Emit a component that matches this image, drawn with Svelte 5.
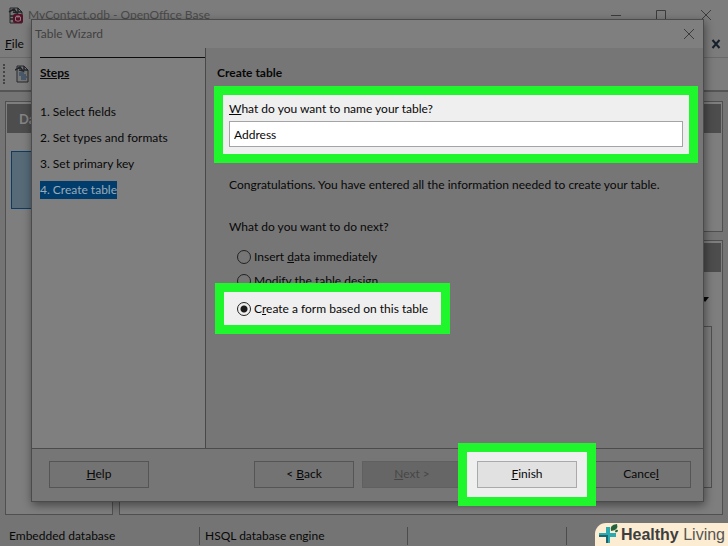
<script lang="ts">
	const steps = ["Select fields", "Set types and formats", "Set primary key", "Create table"];
	const currentStep = 3;

	let tableName = $state("Address");
	let next = $state("form");
</script>

<div class="desktop">
	<div class="app-title">
		<svg class="doc-icon" width="16" height="17" viewBox="0 0 16 17">
			<path d="M2 1h8l4 4v11H2z" fill="#777" stroke="#26292c" />
			<path d="M10 1v4h4M1 5l5-3 3 4-4-1M2 9h4M2 12h4" fill="none" stroke="#202326" stroke-width="1.5" />
			<rect x="5" y="7" width="10" height="9" rx="2" fill="#551226" />
			<ellipse cx="10" cy="9.5" rx="2.5" ry="1" fill="#8d7880" />
			<path d="M7.500 10v3.500q2.500 1.500 5 0V10" fill="none" stroke="#8d7880" />
		</svg>
		<span class="app-name">MyContact.odb - OpenOffice Base</span>
		<button class="win-btn" aria-label="Minimize">
			<svg width="12" height="12" viewBox="0 0 12 12"><path d="M1 6.500h10" /></svg>
		</button>
		<button class="win-btn" aria-label="Maximize">
			<svg width="12" height="12" viewBox="0 0 12 12"><path d="M1.500 1.500h9v10h-9z" /></svg>
		</button>
		<button class="win-btn" aria-label="Close">
			<svg width="12" height="12" viewBox="0 0 12 12"><path d="M1 1l10 10M11 1L1 11" /></svg>
		</button>
	</div>
	<div class="app-menu">
		<button class="menu-item"><u>F</u>ile</button>
		<button class="doc-close" aria-label="Close document">
			<svg width="10" height="10" viewBox="0 0 10 10"><path d="M1.500 1l7 8M8.500 1l-7 8" fill="none" stroke="#17212c" stroke-width="2" /></svg>
		</button>
	</div>
	<div class="app-toolbar">
		<span class="grip"></span>
		<svg class="doc-icon" width="15" height="18" viewBox="0 0 15 18">
			<path d="M2 1h7l4 4v12H2z" fill="#777" stroke="#24282c" />
			<path d="M9 1v4h4M0 5l5-3 3 4-4-1" fill="none" stroke="#24282c" stroke-width="1.500" />
			<path d="M4 8h5M4 10h7M6 12h6M6 14h5" stroke="#1f3d5c" />
		</svg>
	</div>
	<div class="panes">
		<div class="pane pane-left">
			<div class="pane-title">Da</div>
			<div class="pane-item"></div>
		</div>
		<div class="pane-stack">
			<div class="pane pane-tasks"><div class="pane-title"></div></div>
			<div class="pane pane-tables">
				<div class="pane-title"></div>
				<div class="preview-mode">
					<svg width="8" height="6" viewBox="0 0 8 6"><path d="M0 1h8L4 6z" fill="#080808" /></svg>
				</div>
				<div class="preview"></div>
			</div>
		</div>
	</div>
	<div class="status">
		<span class="status-type">Embedded database</span>
		<span class="status-engine">HSQL database engine</span>
		<span class="status-host"></span>
	</div>

	<div class="wizard" role="dialog" aria-labelledby="wizard-title">
		<div class="wizard-title">
			<span id="wizard-title">Table Wizard</span>
			<button class="win-btn" aria-label="Close wizard">
				<svg width="12" height="12" viewBox="0 0 12 12"><path d="M1 1l10 10M11 1L1 11" /></svg>
			</button>
		</div>
		<div class="wizard-body">
			<nav class="steps">
				<h2>Steps</h2>
				<ol>
					{#each steps as step, i}
						<li><span class="step" class:current={i === currentStep}>{i + 1}. {step}</span></li>
					{/each}
				</ol>
			</nav>
			<form class="page">
				<h2>Create table</h2>
				<div class="name-field spotlight">
					<label for="table-name"><u>W</u>hat do you want to name your table?</label>
					<input id="table-name" type="text" bind:value={tableName} />
				</div>
				<p class="message">Congratulations. You have entered all the information needed to create your table.</p>
				<fieldset>
					<legend>What do you want to do next?</legend>
					<label class="option"><input type="radio" value="data" bind:group={next} /><span>Insert <u>d</u>ata immediately</span></label>
					<label class="option"><input type="radio" value="design" bind:group={next} /><span><u>M</u>odify the table design</span></label>
					<label class="option spotlight"><input type="radio" value="form" bind:group={next} /><span>C<u>r</u>eate a form based on this table</span></label>
				</fieldset>
			</form>
		</div>
		<div class="wizard-footer">
			<button class="btn help"><u>H</u>elp</button>
			<button class="btn">&lt; <u>B</u>ack</button>
			<button class="btn next" disabled><u>N</u>ext &gt;</button>
			<div class="finish spotlight"><button class="btn"><u>F</u>inish</button></div>
			<button class="btn">Cance<u>l</u></button>
		</div>
	</div>

	<div class="watermark">
		<svg width="21" height="23" viewBox="0 0 21 23">
			<path d="M8 4h4v6h6v4h-6v6H8v-6H1v-4h7z" fill="#2aa9b0" />
			<path d="M1 12h9v8H8v-6H1z" fill="#186674" />
			<path d="M13 8q-2-6 6-7q2 6-6 7" fill="#24643a" />
			<path d="M17 9q0-3 3-2q0 3-3 2" fill="#24643a" />
		</svg>
		<span><b>Healthy</b> Living</span>
	</div>
</div>

<style>
	:global(body) {
		background: #737373;
	}

	.desktop {
		position: relative;
		display: flex;
		flex-direction: column;
		min-height: 100vh;
		overflow: hidden;
		background: #747474;
		color: #080808;
		font-family: Lato, "Noto Sans", sans-serif;
		font-size: 12px;
		line-height: 18px;
	}

	button,
	input {
		font: inherit;
		color: inherit;
	}

	button {
		padding: 0;
		border: none;
		background: none;
	}

	h2 {
		margin: 0;
		font-size: inherit;
	}

	.app-title {
		display: flex;
		align-items: center;
		height: 30px;
		padding: 0 16px 0 8px;
		background: #7c7c7c;
		color: #4a4a4a;
	}

	.doc-icon {
		flex: none;
	}

	.app-name {
		flex: 1;
		margin-left: 4px;
	}

	.win-btn {
		display: grid;
		place-items: center;
		width: 12px;
		margin-left: 33px;
	}

	.win-btn path {
		fill: none;
		stroke: #3c3c3c;
	}

	.app-menu {
		display: flex;
		align-items: center;
		justify-content: space-between;
		height: 27px;
		padding: 0 7px 0 5px;
		border-bottom: 1px solid #6a6a6a;
		background: #7c7c7c;
	}

	.doc-close {
		display: grid;
	}

	.app-toolbar {
		display: flex;
		align-items: center;
		gap: 10px;
		height: 32px;
		padding-left: 3px;
		border-bottom: 2px solid #555;
		background: #7c7c7c;
	}

	.grip {
		height: 20px;
		border-left: 2px dotted #444;
	}

	.panes {
		flex: 1;
		display: flex;
		gap: 6px;
		padding: 9px 5px 7px;
	}

	.pane {
		padding: 2px 1px;
		border: 1px solid #505050;
		background: #7e7e7e;
	}

	.pane-left {
		width: 104px;
	}

	.pane-title {
		height: 29px;
		padding-left: 12px;
		background: #4d4d4d;
		color: #858585;
		font-size: 13px;
		font-weight: bold;
		line-height: 30px;
	}

	.pane-item {
		height: 56px;
		margin: 18px 4px 0;
		border: 1px solid #0c3c66;
		background: #566a78;
	}

	.pane-stack {
		flex: 1;
		display: flex;
		flex-direction: column;
		gap: 8px;
	}

	.pane-tasks {
		height: 125px;
	}

	.pane-tables {
		flex: 1;
		display: flex;
		flex-direction: column;
	}

	.preview-mode {
		display: flex;
		align-items: center;
		justify-content: flex-end;
		height: 54px;
		padding-right: 12px;
	}

	.preview {
		flex: 1;
		margin: 0 9px 24px;
		border: 1px solid #505050;
	}

	.status {
		display: flex;
		align-items: center;
		height: 20px;
		padding: 4px 0 0 9px;
	}

	.status span {
		height: 18px;
		border-right: 1px solid #4c4c4c;
	}

	.status-type {
		width: 190px;
	}

	.status-engine {
		width: 202px;
		padding-left: 5px;
	}

	.status-host {
		width: 158px;
	}

	.wizard {
		position: absolute;
		inset: 19px 24px 44px 31px;
		display: flex;
		flex-direction: column;
		border: 1px solid #4b4b4b;
		background: #767676;
		box-shadow: 1px 3px 9px rgba(0, 0, 0, 0.45);
	}

	.wizard-title {
		display: flex;
		align-items: center;
		justify-content: space-between;
		height: 28px;
		padding: 0 8px 0 3px;
		background: #7f7f7f;
		color: #414141;
	}

	.wizard-body {
		flex: 1;
		display: flex;
	}

	.steps {
		width: 165px;
		padding: 9px 0 0 8px;
		border-right: 1px solid #484848;
		background: #7f7f7f;
	}

	.steps h2 {
		padding-top: 6px;
		border-top: 1px solid #0c0c0c;
		text-decoration: underline;
	}

	ol {
		display: grid;
		gap: 8px;
		margin: 21px 0 0;
		padding: 0;
		list-style: none;
	}

	.step {
		display: inline-block;
	}

	.step.current {
		background: #003d6d;
		color: #9aabb8;
	}

	.page {
		flex: 1;
		padding: 16px 14px 0 17px;
	}

	.page h2 {
		margin-left: -6px;
	}

	.spotlight {
		position: relative;
		background: #efefef;
		box-shadow: 0 0 0 9px #20f62c;
	}

	.name-field {
		display: grid;
		gap: 3px;
		margin-top: 13px;
		padding: 5px 6px 7px;
	}

	.name-field input {
		min-width: 0;
		height: 26px;
		box-sizing: border-box;
		padding: 0 4px;
		border: 1px solid #a4a4a4;
		background: #fff;
		outline: none;
	}

	.message {
		margin: 22px 0 0 6px;
	}

	fieldset {
		display: flex;
		flex-direction: column;
		align-items: flex-start;
		margin: 24px 0 0;
		padding: 0;
		border: none;
	}

	legend {
		margin-left: 6px;
		padding: 0 0 9px;
	}

	.option {
		display: flex;
		align-items: center;
		gap: 3px;
		height: 24px;
		padding: 0 13px 0 14px;
	}

	.option.spotlight {
		height: 33px;
		margin: -1px 0 0 1px;
		padding-left: 13px;
	}

	.option input {
		appearance: none;
		width: 14px;
		height: 14px;
		box-sizing: border-box;
		margin: 0;
		border: 1px solid #222;
		border-radius: 50%;
	}

	.option input:checked {
		background: radial-gradient(circle, #1c1c1c 3px, transparent 4px);
	}

	.wizard-footer {
		display: flex;
		align-items: center;
		height: 50px;
		padding: 0 12px 2px 17px;
		border-top: 1px solid #4b4b4b;
	}

	.btn {
		flex: none;
		width: 100px;
		height: 27px;
		box-sizing: border-box;
		border: 1px solid #555;
		background: #737373;
	}

	.help {
		margin-right: auto;
	}

	.next {
		margin-left: 8px;
		border-color: #606060;
		background: #666;
		color: #464646;
	}

	.finish {
		display: grid;
		place-items: center;
		width: 120px;
		height: 45px;
		margin: 0 4px 0 5px;
	}

	.finish .btn {
		border-color: #aaa;
		background: #e1e1e1;
	}

	.watermark {
		position: absolute;
		right: 0;
		bottom: 0;
		display: flex;
		align-items: center;
		gap: 2px;
		height: 23px;
		padding: 0 3px;
		border-radius: 11px 0 0 0;
		background: #fbecd2;
		color: #555;
		font-family: "Liberation Sans", sans-serif;
		font-size: 16px;
	}

	.watermark b {
		color: #3e3e3e;
	}
</style>
